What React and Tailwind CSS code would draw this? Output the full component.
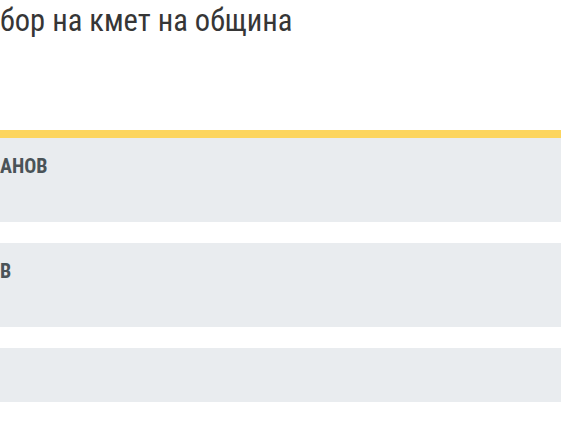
import React from 'react';

const rows = [
  { name: 'АНОВ' },
  { name: 'В' },
  { name: '' },
];

const App = () => {
  return (
    <div className="w-[561px] h-[421px] bg-white overflow-hidden font-['Roboto_Condensed',Roboto,sans-serif]">
      <h1 className="pt-[2px] text-[30.5px] leading-[38px] font-normal text-[#363636]">
        бор на кмет на община
      </h1>

      <div className="mt-[90px]">
        <div className="h-[8px] bg-[#fcd55e]"></div>
        <div className="flex flex-col gap-[21px]">
          {rows.map((row, i) => (
            <div key={i} className={`bg-[#e9ecef] ${i === 2 ? 'h-[54px]' : 'h-[84px]'}`}>
              {row.name && (
                <p className="pt-[16px] text-[20px] leading-[24px] font-bold text-[#4a5358]">{row.name}</p>
              )}
            </div>
          ))}
        </div>
      </div>
    </div>
  );
};

export default App;
